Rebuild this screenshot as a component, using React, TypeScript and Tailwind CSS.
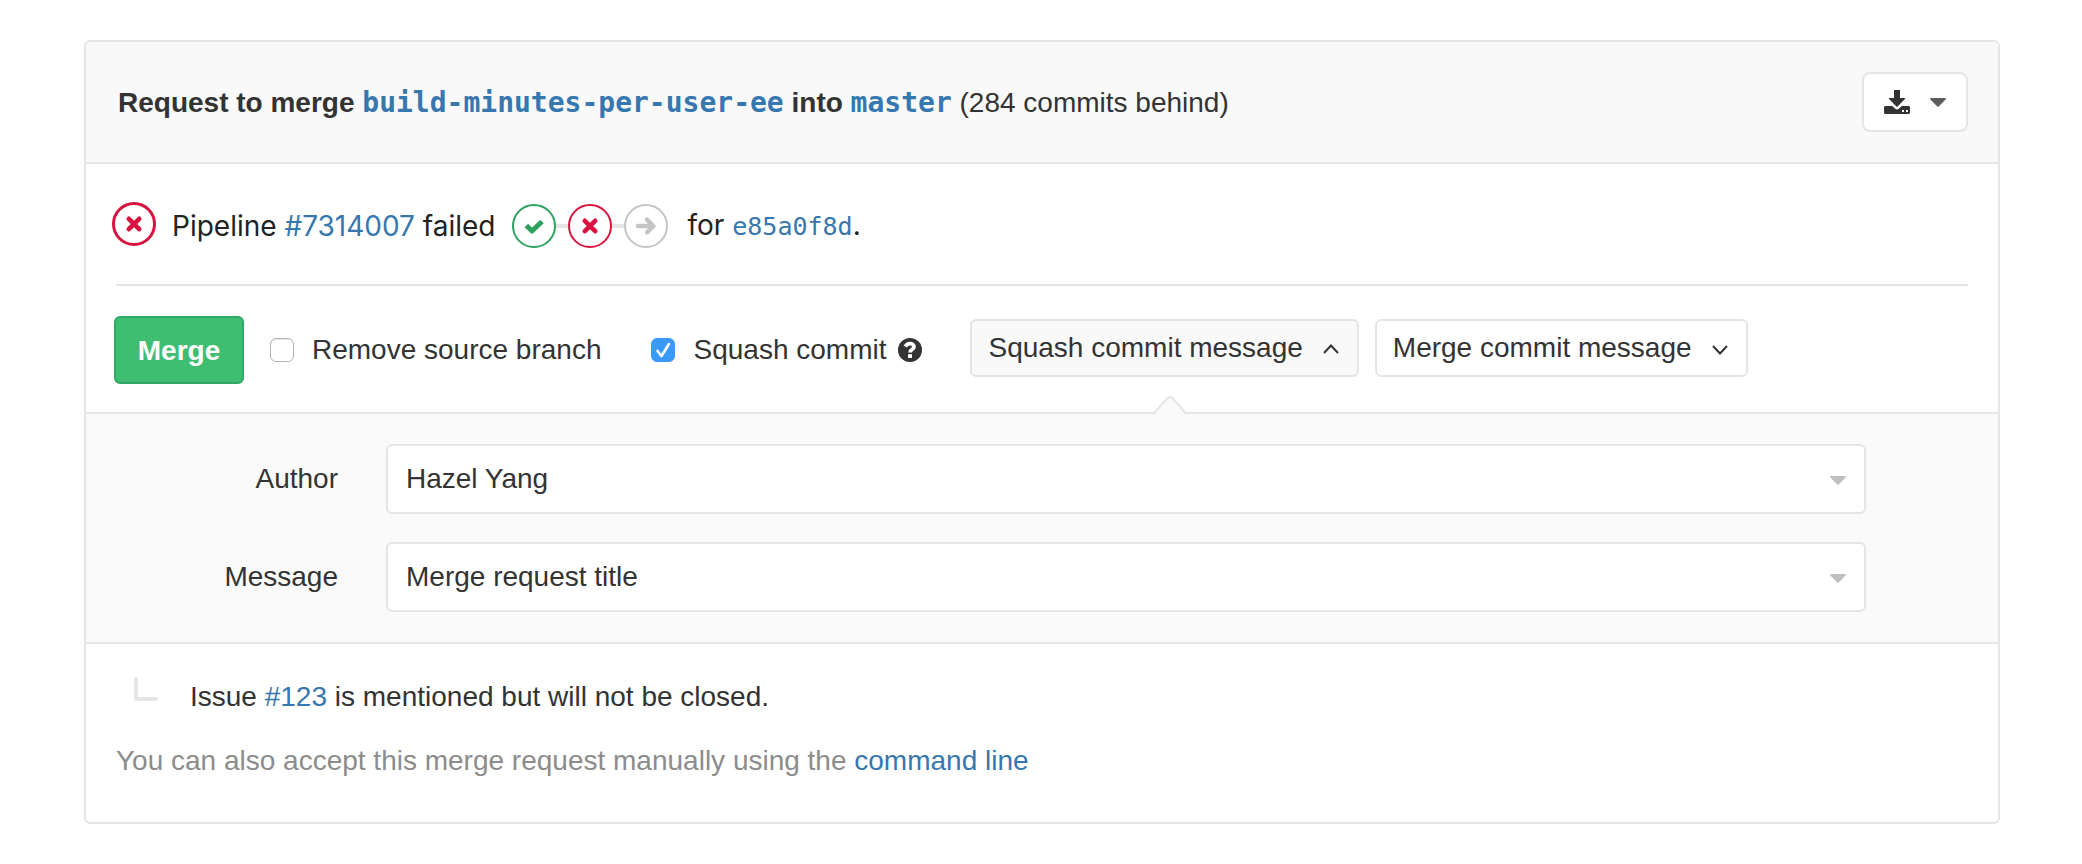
import { useState } from "react";
import type { ReactNode } from "react";

const linkClass = "text-[#3777b0] hover:underline";

function DownloadIcon() {
  return (
    <svg width="26" height="24" viewBox="0 0 26 24" fill="#333333" aria-hidden="true">
      <path d="M10 0h6v8h4.400c.7 0 .9.6.5 1L13.600 16.600c-.4.4-.8.4-1.200 0L5.100 9c-.4-.4-.2-1 .5-1H10z" />
      <path
        fillRule="evenodd"
        d="M1.500 16h6.700l3 2.800c1 1 2.600 1 3.600 0l3-2.800h6.700c.8 0 1.500.7 1.500 1.500v5c0 .8-.7 1.500-1.500 1.500h-23C.7 24 0 23.300 0 22.500v-5C0 16.700.7 16 1.500 16zM18 20v2h2v-2zm4 0v2h2v-2z"
      />
    </svg>
  );
}

function Caret({ className }: { className: string }) {
  return (
    <svg width="16" height="9" viewBox="0 0 16 9" fill="currentColor" className={className} aria-hidden="true">
      <path d="M1 0h14c.9 0 1.200.9.6 1.500L8.700 8.500c-.4.4-1 .4-1.400 0L.4 1.500C-.2.9.1 0 1 0z" />
    </svg>
  );
}

function Chevron({ up }: { up?: boolean }) {
  return (
    <svg width="16" height="14" viewBox="0 0 16 14" fill="none" stroke="#333333" strokeWidth="2" aria-hidden="true">
      <path d={up ? "M1 12 8 4.500l7 7.500" : "M1 5l7 7.500L15 5"} />
    </svg>
  );
}

type Status = "passed" | "failed" | "skipped";

const statusColors: Record<Status, string> = {
  passed: "#2da160",
  failed: "#d9133f",
  skipped: "#c4c4c4",
};

function StatusIcon({ status, ring = 2 }: { status: Status; ring?: number }) {
  const color = statusColors[status];
  return (
    <svg width="44" height="44" viewBox="0 0 44 44" fill="none" stroke={color} role="img" aria-label={status}>
      <circle cx="22" cy="22" r={22 - ring / 2} strokeWidth={ring} fill="#ffffff" />
      {status === "passed" && <path d="m14.300 21.500 5.700 5.500L30 17.500" strokeWidth="5" strokeLinejoin="round" />}
      {status === "failed" && (
        <path d="m16.800 16.800 10.400 10.400m0-10.400L16.800 27.200" strokeWidth="4.600" strokeLinecap="round" />
      )}
      {status === "skipped" && (
        <path d="M14 22h14M23 15.500l6.200 6.500-6.200 6.500" strokeWidth="4.400" strokeLinecap="round" />
      )}
    </svg>
  );
}

function HelpIcon() {
  return (
    <svg width="24" height="24" viewBox="0 0 24 24" role="img" aria-label="Help">
      <circle cx="12" cy="12" r="12" fill="#333333" />
      <path
        d="M7.300 8.600C8.300 6.600 9.900 5.600 12 5.600c2.200 0 4 1.300 4 3.200 0 2.600-3.900 2.500-3.900 5.800"
        fill="none"
        stroke="#ffffff"
        strokeWidth="3.800"
      />
      <path d="M10 16.200h4v3.800h-4z" fill="#ffffff" />
    </svg>
  );
}

function Checkbox({ label, initial, children }: { label: string; initial: boolean; children?: ReactNode }) {
  const [checked, setChecked] = useState(initial);
  return (
    <div className="flex items-center gap-3">
      <label className="flex items-center">
        <span className="relative mr-[18px] flex size-6">
          <input
            type="checkbox"
            checked={checked}
            onChange={(e) => setChecked(e.target.checked)}
            className="size-6 appearance-none rounded-[6px] border border-[#b4b4b4] bg-white shadow-[inset_0_1px_1px_#e5e5e5] checked:border-[#3b99fc] checked:bg-[#3b99fc] checked:shadow-none"
          />
          {checked && (
            <svg
              viewBox="0 0 24 24"
              fill="none"
              stroke="#ffffff"
              strokeWidth="2.600"
              strokeLinecap="round"
              strokeLinejoin="round"
              className="pointer-events-none absolute inset-0"
              aria-hidden="true"
            >
              <path d="m6.500 13 4 5 7.500-12" />
            </svg>
          )}
        </span>
        {label}
      </label>
      {children}
    </div>
  );
}

function Field({ id, label, value }: { id: string; label: string; value: string }) {
  return (
    <div className="flex items-center">
      <label htmlFor={id} className="w-[252px] text-right">
        {label}
      </label>
      <div className="relative ml-12 flex-1">
        <select
          id={id}
          className="h-[70px] w-full appearance-none rounded-[6px] border-2 border-[#e5e5e5] bg-white px-[18px]"
        >
          <option>{value}</option>
        </select>
        <Caret className="pointer-events-none absolute top-8 right-5 text-[#bfbfbf]" />
      </div>
    </div>
  );
}

export default function App() {
  return (
    <div className="min-h-screen bg-white py-10 pr-[82px] pl-[84px] font-['Liberation_Sans',Arial,sans-serif] text-[28px] leading-8 text-[#333333]">
      <main className="overflow-hidden rounded-[6px] border-2 border-[#e5e5e5]">
        <header className="flex items-center justify-between border-b-2 border-[#e5e5e5] bg-[#f9f9f9] py-[30px] pr-[30px] pl-8">
          <h1 className="pt-0.5">
            <strong>
              Request to merge{" "}
              <a href="#source" className={`${linkClass} font-['DejaVu_Sans_Mono',monospace]`}>
                build-minutes-per-user-ee
              </a>{" "}
              into{" "}
              <a href="#target" className={`${linkClass} font-['DejaVu_Sans_Mono',monospace]`}>
                master
              </a>
            </strong>{" "}
            (284 commits behind)
          </h1>
          <button
            type="button"
            aria-label="Download"
            className="flex h-[60px] items-center gap-5 rounded-lg border-2 border-[#e5e5e5] bg-white px-5"
          >
            <DownloadIcon />
            <Caret className="text-[#5c5c5c]" />
          </button>
        </header>

        <section className="mx-[30px] flex h-[122px] items-center border-b-2 border-[#e5e5e5] font-[Inter,sans-serif] text-[#222222]">
          <span className="mr-4 -ml-1">
            <StatusIcon status="failed" ring={3} />
          </span>
          <div className="flex items-center pt-1">
            <p>
              Pipeline{" "}
              <a href="#pipeline" className={linkClass}>
                #7314007
              </a>{" "}
              failed
            </p>
            <div className="mr-5 ml-4 flex items-center">
              <StatusIcon status="passed" />
              <span className="h-1 w-3 bg-[#e5e5e5]" />
              <StatusIcon status="failed" />
              <span className="h-1 w-3 bg-[#e5e5e5]" />
              <StatusIcon status="skipped" />
            </div>
            <p>
              for{" "}
              <a href="#commit" className={`${linkClass} font-['DejaVu_Sans_Mono',monospace] text-[25px]`}>
                e85a0f8d
              </a>
              .
            </p>
          </div>
        </section>

        <section className="flex items-center pt-[30px] pr-[30px] pb-7 pl-7">
          <button
            type="button"
            className="mr-[26px] h-[68px] w-[130px] rounded-[6px] border-2 border-[#31a863] bg-[#3fbe71] pt-0.5 font-bold text-white"
          >
            Merge
          </button>
          <div className="flex gap-[50px]">
            <Checkbox label="Remove source branch" initial={false} />
            <Checkbox label="Squash commit" initial={true}>
              <HelpIcon />
            </Checkbox>
          </div>
          <div className="mb-1 ml-12 flex gap-4">
            <div className="relative">
              <button
                type="button"
                aria-expanded="true"
                className="flex h-[58px] items-center gap-5 rounded-[6px] border-2 border-[#e5e5e5] bg-[#f9f9f9] pr-[18px] pl-4"
              >
                Squash commit message
                <Chevron up />
              </button>
              <svg
                width="34"
                height="20"
                viewBox="0 0 34 20"
                className="absolute -bottom-[39px] left-1/2 -ml-3"
                aria-hidden="true"
              >
                <path d="M0 20v-3h1L14.500 2.200c1.400-1.500 3.600-1.500 5 0L33 17h1v3z" fill="#fafafa" />
                <path
                  d="M0 17.500h1L14.500 2.200c1.400-1.500 3.600-1.500 5 0L33 17.500h1"
                  fill="none"
                  stroke="#e5e5e5"
                  strokeWidth="2"
                />
              </svg>
            </div>
            <button
              type="button"
              aria-expanded="false"
              className="flex h-[58px] items-center gap-5 rounded-[6px] border-2 border-[#e5e5e5] bg-white pr-[18px] pl-4"
            >
              Merge commit message
              <Chevron />
            </button>
          </div>
        </section>

        <section className="flex flex-col gap-7 border-y-2 border-[#e5e5e5] bg-[#fafafa] py-[30px] pr-[132px]">
          <Field id="author" label="Author" value="Hazel Yang" />
          <Field id="message" label="Message" value="Merge request title" />
        </section>

        <section className="px-[30px] pt-[37px] pb-[45px]">
          <p className="flex items-start gap-8 pl-[18px]">
            <svg
              width="24"
              height="24"
              viewBox="0 0 24 24"
              fill="none"
              stroke="#e5e5e5"
              strokeWidth="4"
              strokeLinecap="round"
              strokeLinejoin="round"
              className="-mt-1"
              aria-hidden="true"
            >
              <path d="M2 2v20h20" />
            </svg>
            <span>
              Issue{" "}
              <a href="#123" className={linkClass}>
                #123
              </a>{" "}
              is mentioned but will not be closed.
            </span>
          </p>
          <p className="mt-8 text-[#8c8c8c]">
            You can also accept this merge request manually using the{" "}
            <a href="#command-line" className={linkClass}>
              command line
            </a>
          </p>
        </section>
      </main>
    </div>
  );
}
